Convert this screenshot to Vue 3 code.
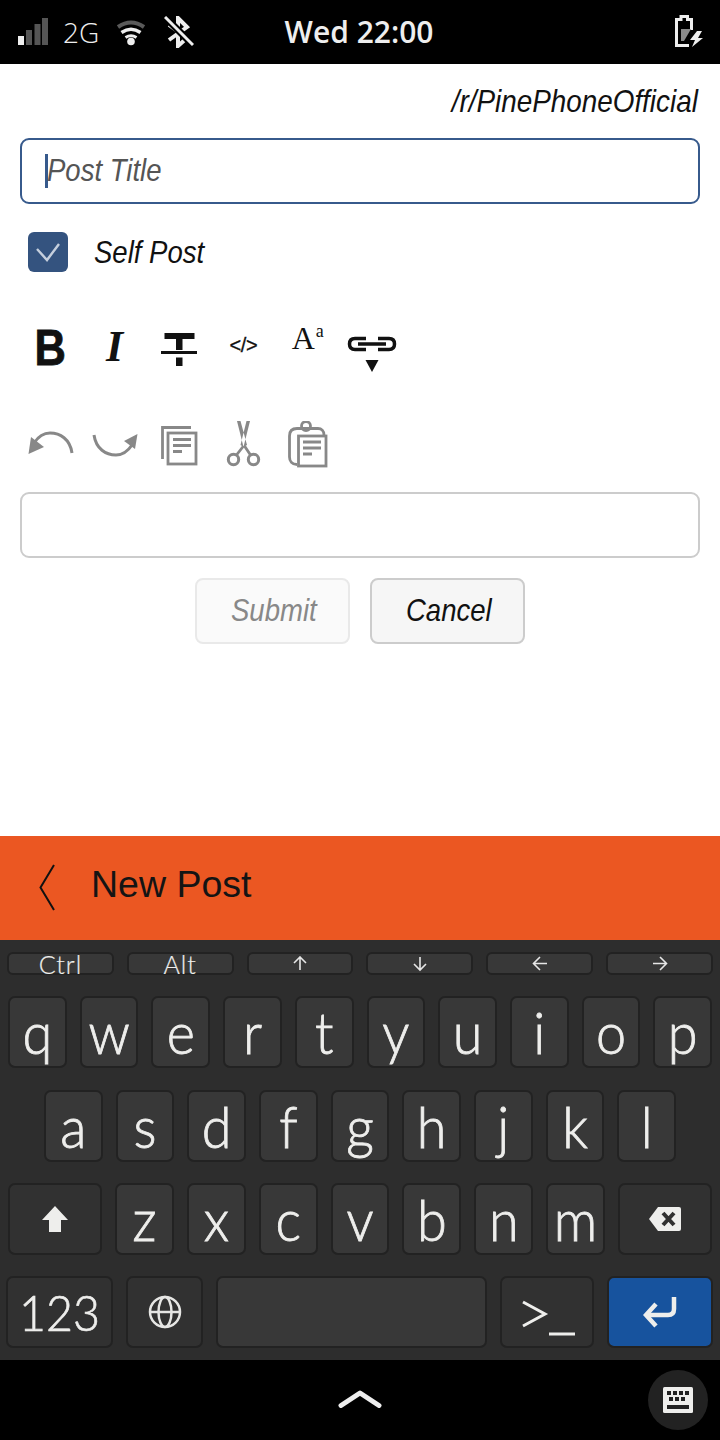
<script setup>
const topRow = [
  { label: 'Ctrl' },
  { label: 'Alt' },
  { arrow: 'M0 0 V-13 M-6 -7 L0 -13 L6 -7' },
  { arrow: 'M0 -13 V0 M-6 -6 L0 0 L6 -6' },
  { arrow: 'M7 -6.500 H-6.500 M0 -13 L-6.500 -6.500 L0 0' },
  { arrow: 'M-7 -6.500 H6.500 M0 -13 L6.500 -6.500 L0 0' },
]
const row1 = 'qwertyuiop'.split('')
const row2 = 'asdfghjkl'.split('')
const row3 = 'zxcvbnm'.split('')
</script>

<template>
  <div class="phone">
    <!-- status bar -->
    <header class="status">
      <div class="status-left">
        <svg class="ic-signal" width="30" height="28" viewBox="18 18 30 28">
          <rect x="18" y="36" width="6" height="9" fill="#eee" />
          <rect x="26" y="30" width="6" height="15" fill="#555" />
          <rect x="34.500" y="24" width="6" height="21" fill="#555" />
          <rect x="42" y="18" width="6" height="27" fill="#555" />
        </svg>
        <span class="net">2G</span>
        <svg class="ic-wifi" width="30" height="30" viewBox="117 17 30 30" fill="none">
          <path d="M119 27 Q132 18 145 27" stroke="#5a5a5a" stroke-width="4" />
          <path d="M122.500 32.500 Q132 26 141.500 32.500" stroke="#eee" stroke-width="3.500" />
          <path d="M126.500 37.500 Q132 34 137.500 37.500" stroke="#eee" stroke-width="3" />
          <circle cx="132" cy="41.500" r="3.800" fill="#eee" />
        </svg>
        <svg class="ic-bt" width="30" height="32" viewBox="165 16 30 32" fill="none">
          <path d="M170 25 L188 38 L179 46 V18 L188 27 L170 40" stroke="#eee" stroke-width="4" />
          <path d="M166 17 L194 45" stroke="#000" stroke-width="7" />
          <path d="M166 17 L194 45" stroke="#eee" stroke-width="3" />
        </svg>
      </div>
      <div class="clock">Wed 22:00</div>
      <div class="status-right">
        <svg width="30" height="34" viewBox="673 16 30 34" fill="none">
          <path d="M690.500 31 V20.500 H686.500 V17.500 H680 V20.500 H675.500 V46.500 H688" stroke="#eee" stroke-width="3" />
          <path d="M680 30 H690 L683 42 H680 Z" fill="#8a8a8a" />
          <path d="M696 32 L689 41 H694 L691 48 L702 39 H697 L701 32 Z" fill="#eee" />
        </svg>
      </div>
    </header>

    <!-- post form -->
    <main class="form">
      <div class="sub"><span class="narrow right">/r/PinePhoneOfficial</span></div>

      <div class="field focused">
        <i class="caret"></i>
        <span class="narrow hint">Post Title</span>
      </div>

      <div class="check-row">
        <span class="check">
          <svg width="26" height="20" viewBox="0 0 26 20" fill="none">
            <path d="M2 7 L12 18 L24 2" stroke="#c5cfdd" stroke-width="2.400" />
          </svg>
        </span>
        <span class="narrow">Self Post</span>
      </div>

      <div class="tools tools-format">
        <span class="tool t-bold">B</span>
        <span class="tool t-italic">I</span>
        <span class="tool">
          <svg width="48" height="48" viewBox="156 321 48 48" fill="#111">
            <rect x="165.500" y="333" width="30" height="6" />
            <rect x="177" y="339" width="6.500" height="11" />
            <rect x="162" y="351" width="36" height="3" />
            <rect x="177" y="357.500" width="6.500" height="8.500" />
          </svg>
        </span>
        <span class="tool t-code">&lt;/&gt;</span>
        <span class="tool t-sup">A<sup>a</sup></span>
        <span class="tool">
          <svg class="over" width="48" height="48" viewBox="348 321 48 48" fill="none">
            <path d="M366 338.500 H355 Q349.500 338.500 349.500 344 Q349.500 349.500 355 349.500 H366 M378 338.500 H389 Q394.500 338.500 394.500 344 Q394.500 349.500 389 349.500 H378 M358 344 H386" stroke="#111" stroke-width="3.500" />
            <path d="M365.500 360 H378.500 L372 372 Z" fill="#111" />
          </svg>
        </span>
      </div>

      <div class="tools tools-edit">
        <span class="tool">
          <svg width="48" height="48" viewBox="26 421 48 48" fill="none">
            <path d="M72 453 C70 439 60 433 50 433 C43 433 38 437 34 443" stroke="#888" stroke-width="3" />
            <path d="M28.500 454 L31 437 L44 447 Z" fill="#888" />
          </svg>
        </span>
        <span class="tool">
          <svg width="48" height="48" viewBox="93 421 48 48" fill="none">
            <path d="M96 435 C98 449 108 455 118 455 C125 455 130 451 134 445" stroke="#888" stroke-width="3" />
            <path d="M139.500 434 L137 449 L126 441 Z" fill="#888" />
          </svg>
        </span>
        <span class="tool">
          <svg width="48" height="48" viewBox="156 421 48 48" fill="none" stroke="#888" stroke-width="2.800">
            <path d="M163.500 459 V427.500 H192" />
            <rect x="169" y="433" width="28" height="31" />
            <path d="M174 439.500 H192 M174 445.500 H192 M174 451.500 H183" />
          </svg>
        </span>
        <span class="tool">
          <svg width="48" height="48" viewBox="218 421 48 48" fill="none">
            <path d="M236 421 H239.500 L246 445 L242.500 447 Z M249 421 H245.500 L239.500 445 L242.500 447 Z" fill="#888" />
            <path d="M242.500 446 L235.500 455 M243.500 446 L249.500 455" stroke="#888" stroke-width="2.800" />
            <circle cx="232.500" cy="459.500" r="5.200" stroke="#888" stroke-width="3" />
            <circle cx="252.500" cy="459.500" r="5.200" stroke="#888" stroke-width="3" />
          </svg>
        </span>
        <span class="tool">
          <svg width="48" height="48" viewBox="283 421 48 48" fill="none" stroke="#888" stroke-width="2.800">
            <path d="M296 464.500 C291 464.500 288.500 461 288.500 457 V436 C288.500 431 291 428.500 296 428.500 H317 C320.500 428.500 323 431 323 435" />
            <circle cx="305" cy="426" r="4.500" />
            <rect x="297.500" y="436" width="27.500" height="30" fill="#fff" />
            <path d="M302 442 H320 M302 448 H320 M302 454 H311" />
          </svg>
        </span>
      </div>

      <div class="field editor"></div>

      <div class="actions">
        <button class="btn off"><span class="narrow">Submit</span></button>
        <button class="btn"><span class="narrow">Cancel</span></button>
      </div>
    </main>

    <!-- page header, sits at the bottom on this shell -->
    <div class="pagehead">
      <svg width="16" height="48" viewBox="0 0 16 48" fill="none">
        <path d="M15 1 L1.500 23.500 L15 46" stroke="#111" stroke-width="2" />
      </svg>
      <span class="pagehead-title">New Post</span>
    </div>

    <!-- on screen keyboard -->
    <section class="kbd">
      <div class="row row-top">
        <div v-for="(k, i) in topRow" :key="i" class="key key-top">
          <template v-if="k.label">{{ k.label }}</template>
          <svg v-else width="16" height="16" viewBox="-8 -14 16 16" fill="none">
            <path :d="k.arrow" stroke="#e6e6e6" stroke-width="1.600" />
          </svg>
        </div>
      </div>

      <div class="row row-1">
        <div v-for="k in row1" :key="k" class="key letter"><span>{{ k }}</span></div>
      </div>
      <div class="row row-2">
        <div v-for="k in row2" :key="k" class="key letter"><span>{{ k }}</span></div>
      </div>
      <div class="row row-3">
        <div class="key dark mod">
          <svg width="28" height="28" viewBox="0 0 28 28">
            <path d="M14 1 L27 15 H20 V27 H8 V15 H1 Z" fill="#eeeeec" />
          </svg>
        </div>
        <div v-for="k in row3" :key="k" class="key letter"><span>{{ k }}</span></div>
        <div class="key dark mod">
          <svg width="34" height="26" viewBox="0 0 34 26">
            <path d="M10 1 H31 Q33 1 33 3 V23 Q33 25 31 25 H10 L1 13 Z" fill="#eeeeec" />
            <path d="M15 7 L26 19 M26 7 L15 19" stroke="#313131" stroke-width="4" />
          </svg>
        </div>
      </div>
      <div class="row row-4">
        <div class="key dark k-num"><span>123</span></div>
        <div class="key dark k-globe">
          <svg width="34" height="34" viewBox="0 0 34 34" fill="none" stroke="#e6e6e4" stroke-width="2.500">
            <circle cx="17" cy="17" r="15" />
            <ellipse cx="17" cy="17" rx="6.500" ry="15" />
            <path d="M2 17 H32" />
          </svg>
        </div>
        <div class="key k-space"></div>
        <div class="key dark k-term">
          <svg width="56" height="42" viewBox="0 0 56 42" fill="none" stroke="#eeeeec">
            <path d="M2 4 L24 16 L2 28" stroke-width="3" />
            <path d="M28 36 H54" stroke-width="3" />
          </svg>
        </div>
        <div class="key k-enter">
          <svg width="34" height="32" viewBox="0 0 34 32" fill="none" stroke="#eeeeec" stroke-width="4.500">
            <path d="M31 1 V13 Q31 19 25 19 H4" />
            <path d="M13 8 L3 19 L13 30" />
          </svg>
        </div>
      </div>
    </section>

    <!-- shell bar -->
    <footer class="shell">
      <span></span>
      <svg width="44" height="18" viewBox="0 0 44 18" fill="none">
        <path d="M3 15.500 L22 3 L41 15.500" stroke="#eee" stroke-width="5" stroke-linecap="round" stroke-linejoin="round" />
      </svg>
      <div class="kbd-toggle">
        <svg width="30" height="26" viewBox="0 0 30 26">
          <rect width="30" height="26" rx="1.500" fill="#eeeeec" />
          <g fill="#222">
            <rect x="4" y="4" width="4" height="4" /><rect x="10" y="4" width="4" height="4" /><rect x="16" y="4" width="4" height="4" /><rect x="22" y="4" width="4" height="4" />
            <rect x="6" y="10" width="4" height="4" /><rect x="12" y="10" width="4" height="4" /><rect x="18" y="10" width="4" height="4" />
            <rect x="4" y="18" width="22" height="4" />
          </g>
        </svg>
      </div>
    </footer>
  </div>
</template>

<style scoped>
.phone {
  width: 720px;
  height: 1440px;
  display: flex;
  flex-direction: column;
  overflow: hidden;
  background: #fff;
  font-family: "Liberation Sans", Arial, sans-serif;
}

/* STATUS */
.status {
  height: 64px;
  flex: none;
  background: #000;
  color: #eee;
  display: grid;
  grid-template-columns: 1fr auto 1fr;
  align-items: center;
  padding: 0 18px;
  box-sizing: border-box;
  font-family: "Open Sans", sans-serif;
}
.status-left {
  display: flex;
  align-items: center;
}
.net {
  font-size: 28px;
  font-weight: 300;
  margin-left: 15px;
  width: 40px;
  display: inline-block;
}
.ic-signal {
  margin-top: -1px;
}
.ic-wifi {
  margin-left: 13px;
}
.ic-bt {
  margin-left: 18px;
}
.clock {
  font-size: 30px;
  font-weight: 600;
  margin-left: -2px;
  margin-top: -1px;
}
.status-right {
  display: flex;
  justify-content: flex-end;
  margin-right: -2px;
}

/* FORM */
.form {
  height: 772px;
  flex: none;
  box-sizing: border-box;
  padding: 0 20px;
  display: flex;
  flex-direction: column;
  color: #111;
}
.narrow {
  display: inline-block;
  font-style: italic;
  font-size: 32px;
  transform: scaleX(.86);
  transform-origin: left center;
  white-space: nowrap;
  margin-top: -2px;
}
.narrow.right {
  transform: scaleX(.87);
  transform-origin: right center;
}
.sub .narrow,
.check-row .narrow {
  margin-top: 0;
}
.sub {
  height: 74px;
  display: flex;
  justify-content: flex-end;
  align-items: center;
  padding-right: 2px;
}
.field {
  height: 66px;
  box-sizing: border-box;
  border: 2px solid #ccc;
  border-radius: 9px;
  background: #fff;
  flex: none;
}
.focused {
  border-color: #375a8c;
  display: flex;
  align-items: center;
  padding-left: 23px;
}
.caret {
  width: 3px;
  height: 34px;
  background: #375a8c;
  margin-right: -1px;
}
.hint {
  color: #555;
}
.check-row {
  display: flex;
  align-items: center;
  margin-top: 28px;
  padding-left: 8px;
  height: 40px;
}
.check {
  width: 40px;
  height: 40px;
  border-radius: 6px;
  background: #34537f;
  display: flex;
  align-items: center;
  justify-content: center;
  margin-right: 26px;
}
.tools {
  display: grid;
  grid-template-columns: repeat(6, 64.400px);
  margin-left: -2px;
}
.tool {
  height: 48px;
  box-sizing: border-box;
  display: flex;
  align-items: center;
  justify-content: center;
}
.over {
  overflow: visible;
}
.tools-format {
  margin-top: 49px;
}
.tools-edit {
  margin-top: 52px;
}
.t-bold {
  font-weight: 700;
  font-size: 50px;
  color: #111;
  -webkit-text-stroke: .8px #111;
  padding-top: 6px;
  transform: scaleX(.87);
}
.t-italic {
  font-family: "Liberation Serif", serif;
  font-style: italic;
  font-weight: 700;
  font-size: 44px;
  color: #111;
  padding-top: 2px;
}
.t-code {
  font-size: 20px;
  letter-spacing: -.4px;
  color: #111;
  -webkit-text-stroke: .3px #111;
}
.t-sup {
  font-family: "Liberation Serif", serif;
  font-size: 32px;
  color: #111;
  align-items: flex-start;
  line-height: 34px;
}
.t-sup sup {
  font-size: 18px;
  line-height: 1;
  vertical-align: baseline;
  position: relative;
  top: 1px;
  margin-left: 1px;
}
.editor {
  margin-top: 23px;
}
.actions {
  margin-top: 20px;
  display: flex;
  justify-content: center;
  gap: 20px;
  padding-right: 1px;
}
.btn {
  width: 155px;
  height: 66px;
  box-sizing: border-box;
  border: 2px solid #ccc;
  border-radius: 8px;
  background: #f6f6f6;
  color: #111;
  font-family: inherit;
  padding: 0 0 0 34px;
  text-align: left;
}
.btn.off {
  border-color: #e9e9e9;
  background: #fafafa;
  color: #888;
}

/* ORANGE HEADER */
.pagehead {
  height: 104px;
  flex: none;
  box-sizing: border-box;
  background: #eb5722;
  display: flex;
  align-items: center;
  padding-left: 39px;
  gap: 36px;
  color: #141414;
}
.pagehead-title {
  font-size: 37.500px;
  margin-top: -7px;
}

/* KEYBOARD */
.kbd {
  height: 420px;
  flex: none;
  box-sizing: border-box;
  background: #2d2d2d;
  padding-top: 12px;
  display: flex;
  flex-direction: column;
  gap: 21.300px;
  font-family: "Lato", sans-serif;
  color: #eeeeec;
}
.row {
  display: flex;
  height: 72px;
  flex: none;
  gap: 13px;
  padding: 0 8px;
}
.key {
  flex: 1 1 0;
  min-width: 0;
  box-sizing: border-box;
  background: #383838;
  border: 2px solid #222;
  border-radius: 7px;
  display: flex;
  align-items: center;
  justify-content: center;
}
.row-top {
  height: 23px;
  gap: 13px;
  padding: 0 7px;
}
.key-top {
  font-size: 25px;
  font-weight: 300;
  -webkit-text-stroke: .2px #eeeeec;
  line-height: 20px;
  padding-top: 1px;
  letter-spacing: 1px;
  border-radius: 6px;
}
.row-2 {
  padding: 0 44px;
}
.letter span {
  font-size: 54px;
  font-weight: 300;
  -webkit-text-stroke: .8px #eeeeec;
  line-height: 1;
  margin-top: 2px;
  transform: scaleY(1.05);
}
.dark {
  background: #313131;
}
.mod {
  flex: none;
  width: 94px;
}
.row-4 {
  padding: 0 7px 0 6px;
}
.row-4 .key {
  flex: none;
}
.k-num {
  width: 107px;
  font-size: 50px;
  font-weight: 300;
  -webkit-text-stroke: .7px #eeeeec;
}
.k-num span {
  transform: scaleX(.93);
}
.k-globe {
  width: 77px;
}
.k-space {
  width: 271px;
}
.k-term {
  width: 94px;
}
.k-term svg {
  margin: 14px 0 0 4px;
}
.k-enter {
  width: 106px;
  background: #17539e;
}

/* SHELL */
.shell {
  flex: 1;
  background: #000;
  display: grid;
  grid-template-columns: 1fr auto 1fr;
  align-items: center;
  justify-items: end;
  padding-right: 12px;
}
.shell > svg {
  justify-self: center;
  margin-left: 12px;
  margin-top: -2px;
}
.kbd-toggle {
  width: 60px;
  height: 60px;
  border-radius: 50%;
  background: #222;
  display: flex;
  align-items: center;
  justify-content: center;
}
</style>
